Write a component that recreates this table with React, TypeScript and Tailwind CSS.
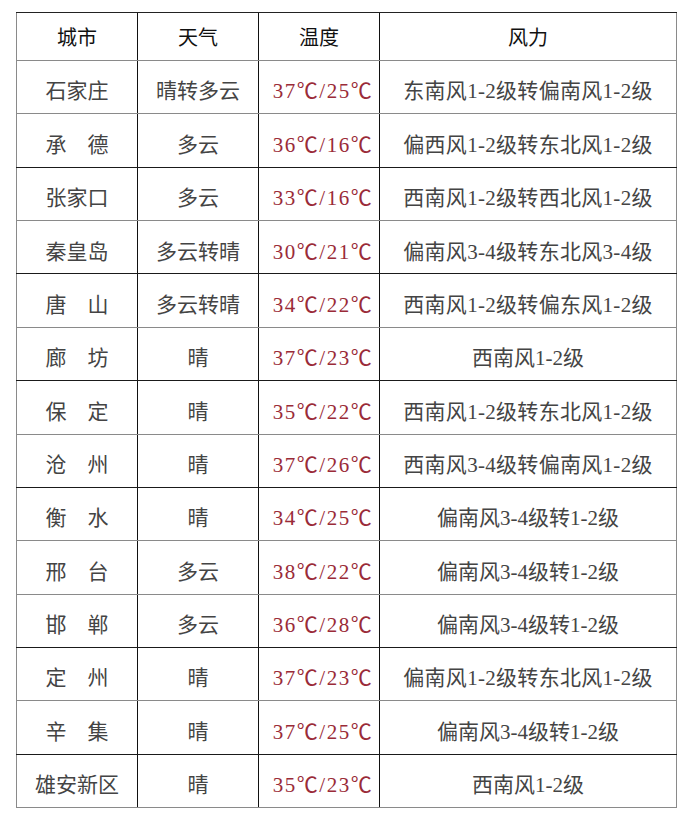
const rows: { city: string; weather: string; temp: string; wind: string; line: "dark" | "light"; wide?: boolean }[] = [
  { city: "石家庄", weather: "晴转多云", temp: "37℃/25℃", wind: "东南风1-2级转偏南风1-2级", line: "light", wide: true },
  { city: "承\u3000德", weather: "多云", temp: "36℃/16℃", wind: "偏西风1-2级转东北风1-2级", line: "light", wide: true },
  { city: "张家口", weather: "多云", temp: "33℃/16℃", wind: "西南风1-2级转西北风1-2级", line: "dark", wide: true },
  { city: "秦皇岛", weather: "多云转晴", temp: "30℃/21℃", wind: "偏南风3-4级转东北风3-4级", line: "light", wide: true },
  { city: "唐\u3000山", weather: "多云转晴", temp: "34℃/22℃", wind: "西南风1-2级转偏东风1-2级", line: "dark", wide: true },
  { city: "廊\u3000坊", weather: "晴", temp: "37℃/23℃", wind: "西南风1-2级", line: "light" },
  { city: "保\u3000定", weather: "晴", temp: "35℃/22℃", wind: "西南风1-2级转东北风1-2级", line: "dark", wide: true },
  { city: "沧\u3000州", weather: "晴", temp: "37℃/26℃", wind: "西南风3-4级转偏南风1-2级", line: "light", wide: true },
  { city: "衡\u3000水", weather: "晴", temp: "34℃/25℃", wind: "偏南风3-4级转1-2级", line: "dark" },
  { city: "邢\u3000台", weather: "多云", temp: "38℃/22℃", wind: "偏南风3-4级转1-2级", line: "light" },
  { city: "邯\u3000郸", weather: "多云", temp: "36℃/28℃", wind: "偏南风3-4级转1-2级", line: "light" },
  { city: "定\u3000州", weather: "晴", temp: "37℃/23℃", wind: "偏南风1-2级转东北风1-2级", line: "dark", wide: true },
  { city: "辛\u3000集", weather: "晴", temp: "37℃/25℃", wind: "偏南风3-4级转1-2级", line: "light" },
  { city: "雄安新区", weather: "晴", temp: "35℃/23℃", wind: "西南风1-2级", line: "dark" },
];

const font = { fontFamily: '"Liberation Serif", "Noto Sans CJK SC", serif' };

export default function App() {
  return (
    <div className="w-[690px] h-[840px] bg-white pt-[12px] pl-[16px]" style={font}>
      <div className="w-[661px] border-b border-[#8a8a8a]">
        {/* Header */}
        <div className="grid grid-cols-[121px_121px_121px_298px] h-[48px] border-t border-[#222] text-[20px] text-[#111]">
          <div className="flex items-center justify-center pt-[3px] border-l border-[#8a8a8a]">城市</div>
          <div className="flex items-center justify-center pt-[3px] border-l border-[#111]">天气</div>
          <div className="flex items-center justify-center pt-[3px] border-l border-[#111]">温度</div>
          <div className="flex items-center justify-center pt-[3px] border-l border-[#111] border-r border-r-[#8a8a8a]">风力</div>
        </div>

        {/* Rows */}
        {rows.map((r, i) => (
          <div
            key={i}
            className={
              "grid grid-cols-[121px_121px_121px_298px] h-[53.36px] border-t text-[21px] text-[#444] " +
              (r.line === "dark" ? "border-[#1a1a1a]" : "border-[#8a8a8a]")
            }
          >
            <div className="flex items-center justify-center pt-[10px] border-l border-l-[#8a8a8a] whitespace-pre">{r.city}</div>
            <div className="flex items-center justify-center pt-[10px] border-l border-l-[#111]">{r.weather}</div>
            <div className="flex items-center justify-center pt-[10px] pl-[8px] border-l border-l-[#111] text-[#9a2b38] tracking-[1.5px]">{r.temp}</div>
            <div
              className={
                "flex items-center justify-center pt-[10px] border-l border-l-[#111] border-r border-r-[#8a8a8a] whitespace-nowrap " +
                (r.wide ? "tracking-[0.3px]" : "")
              }
            >
              {r.wind}
            </div>
          </div>
        ))}
      </div>
    </div>
  );
}
